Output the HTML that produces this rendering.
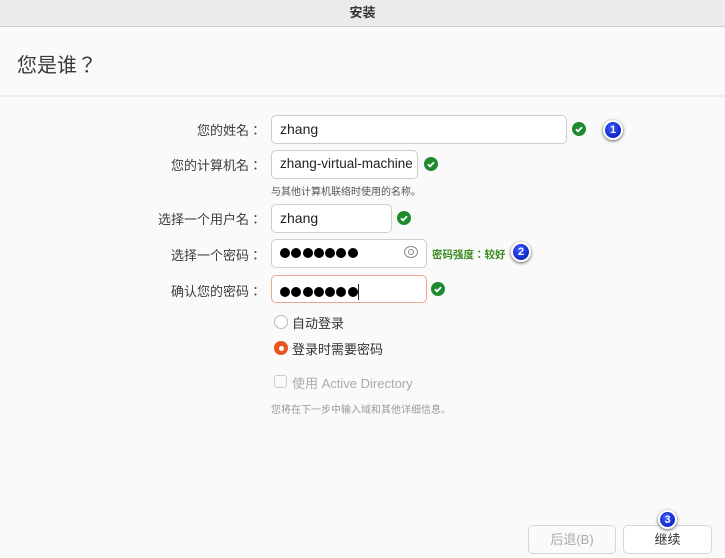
<!DOCTYPE html><html><head><meta charset="utf-8"><style>
*{margin:0;padding:0;box-sizing:border-box}
body{width:725px;height:558px;background:#fafafa;font-family:"Liberation Sans","Noto Sans CJK SC",sans-serif;position:relative;overflow:hidden;color:#333}
.a{position:absolute}
.tb{left:0;top:0;width:725px;height:27px;background:#ebebeb;border-bottom:1px solid #cfcfcf;text-align:center;font-size:13px;font-weight:bold;line-height:26px;color:#333}
.lab{right:463px;font-size:13px;color:#3c3c3c;text-align:right;white-space:nowrap;font-family:"Noto Sans CJK TC",sans-serif}
.in{background:#fff;border:1px solid #cdcdcd;border-radius:5px;font-size:14px;padding-left:8px;line-height:26px;color:#222}
.ok{width:14px;height:14px;border-radius:50%;background:#1f8a2e}
.ok svg{position:absolute;left:0;top:0}
.bd{width:20px;height:20px;border-radius:50%;background:radial-gradient(circle at 40% 35%,#3a5cff,#0010b0);border:2px solid #fff;box-shadow:0 1px 3px #555;color:#fff;font-size:11px;font-weight:bold;text-align:center;line-height:16px}
.dots{padding-left:8px;padding-top:8px;line-height:0}
.dots i{display:inline-block;width:10px;height:10px;border-radius:50%;background:#000;margin-right:1.3px}
.btn{border:1px solid #d6d6d6;border-radius:5px;background:#fff;font-size:13px;text-align:center;line-height:27px}
</style></head><body>
<div class="a tb">安装</div>
<div class="a" style="left:17px;top:49px;font-size:20px;color:#3a3a3a;font-family:'Noto Sans CJK TC',sans-serif">您是谁？</div>
<div class="a" style="left:0;top:95px;width:725px;height:2px;background:#eeeeee"></div>

<div class="a lab" style="top:120px">您的姓名：</div>
<div class="a in" style="left:271px;top:115px;width:296px;height:29px">zhang</div>
<div class="a ok" style="left:572px;top:122px"><svg width="14" height="14"><path d="M4 7.3l2 2 4-4" stroke="#fff" stroke-width="1.8" fill="none"/></svg></div>
<div class="a bd" style="left:603px;top:120px">1</div>

<div class="a lab" style="top:155px">您的计算机名：</div>
<div class="a in" style="left:271px;top:150px;width:147px;height:29px;font-size:13.5px">zhang-virtual-machine</div>
<div class="a ok" style="left:424px;top:157px"><svg width="14" height="14"><path d="M4 7.3l2 2 4-4" stroke="#fff" stroke-width="1.8" fill="none"/></svg></div>
<div class="a" style="left:271px;top:183px;font-size:10px;color:#555">与其他计算机联络时使用的名称。</div>

<div class="a lab" style="top:209px">选择一个用户名：</div>
<div class="a in" style="left:271px;top:204px;width:121px;height:29px">zhang</div>
<div class="a ok" style="left:397px;top:211px"><svg width="14" height="14"><path d="M4 7.3l2 2 4-4" stroke="#fff" stroke-width="1.8" fill="none"/></svg></div>

<div class="a lab" style="top:245px">选择一个密码：</div>
<div class="a in dots" style="left:271px;top:239px;width:156px;height:29px"><i></i><i></i><i></i><i></i><i></i><i></i><i></i></div>
<div class="a" style="left:404px;top:246px;width:14px;height:12px;border:1.5px solid #888;border-radius:50%"></div>
<div class="a" style="left:408px;top:249px;width:6px;height:6px;border:1.5px solid #888;border-radius:50%"></div>
<div class="a" style="left:432px;top:247px;font-size:10.5px;font-weight:bold;color:#3a8a20;font-family:'Noto Sans CJK TC',sans-serif">密码强度：较好</div>
<div class="a bd" style="left:511px;top:242px">2</div>

<div class="a lab" style="top:281px">确认您的密码：</div>
<div class="a in dots" style="left:271px;top:275px;width:156px;height:28px;border-color:#f0a48a"><i></i><i></i><i></i><i></i><i></i><i></i><i></i><span style="display:inline-block;width:1px;height:16px;background:#222;vertical-align:-3px;margin-left:-1px"></span></div>
<div class="a ok" style="left:431px;top:282px"><svg width="14" height="14"><path d="M4 7.3l2 2 4-4" stroke="#fff" stroke-width="1.8" fill="none"/></svg></div>

<div class="a" style="left:274px;top:315px;width:14px;height:14px;border-radius:50%;border:1px solid #bbb;background:#fff"></div>
<div class="a" style="left:292px;top:313px;font-size:13px;color:#333">自动登录</div>
<div class="a" style="left:274px;top:341px;width:14px;height:14px;border-radius:50%;background:#e95420"></div>
<div class="a" style="left:278.5px;top:345.5px;width:5px;height:5px;border-radius:50%;background:#fff"></div>
<div class="a" style="left:292px;top:339px;font-size:13px;color:#333">登录时需要密码</div>

<div class="a" style="left:274px;top:375px;width:13px;height:13px;border-radius:3px;border:1px solid #ccc;background:#fafafa"></div>
<div class="a" style="left:292px;top:373px;font-size:13px;color:#aaa">使用 Active Directory</div>
<div class="a" style="left:271px;top:401px;font-size:10px;color:#999">您将在下一步中输入域和其他详细信息。</div>

<div class="a btn" style="left:528px;top:525px;width:88px;height:29px;color:#aaa;background:#fafafa">后退(B)</div>
<div class="a btn" style="left:623px;top:525px;width:89px;height:29px;color:#333">继续</div>
<div class="a bd" style="left:658px;top:510px;width:19px;height:19px">3</div>
</body></html>
